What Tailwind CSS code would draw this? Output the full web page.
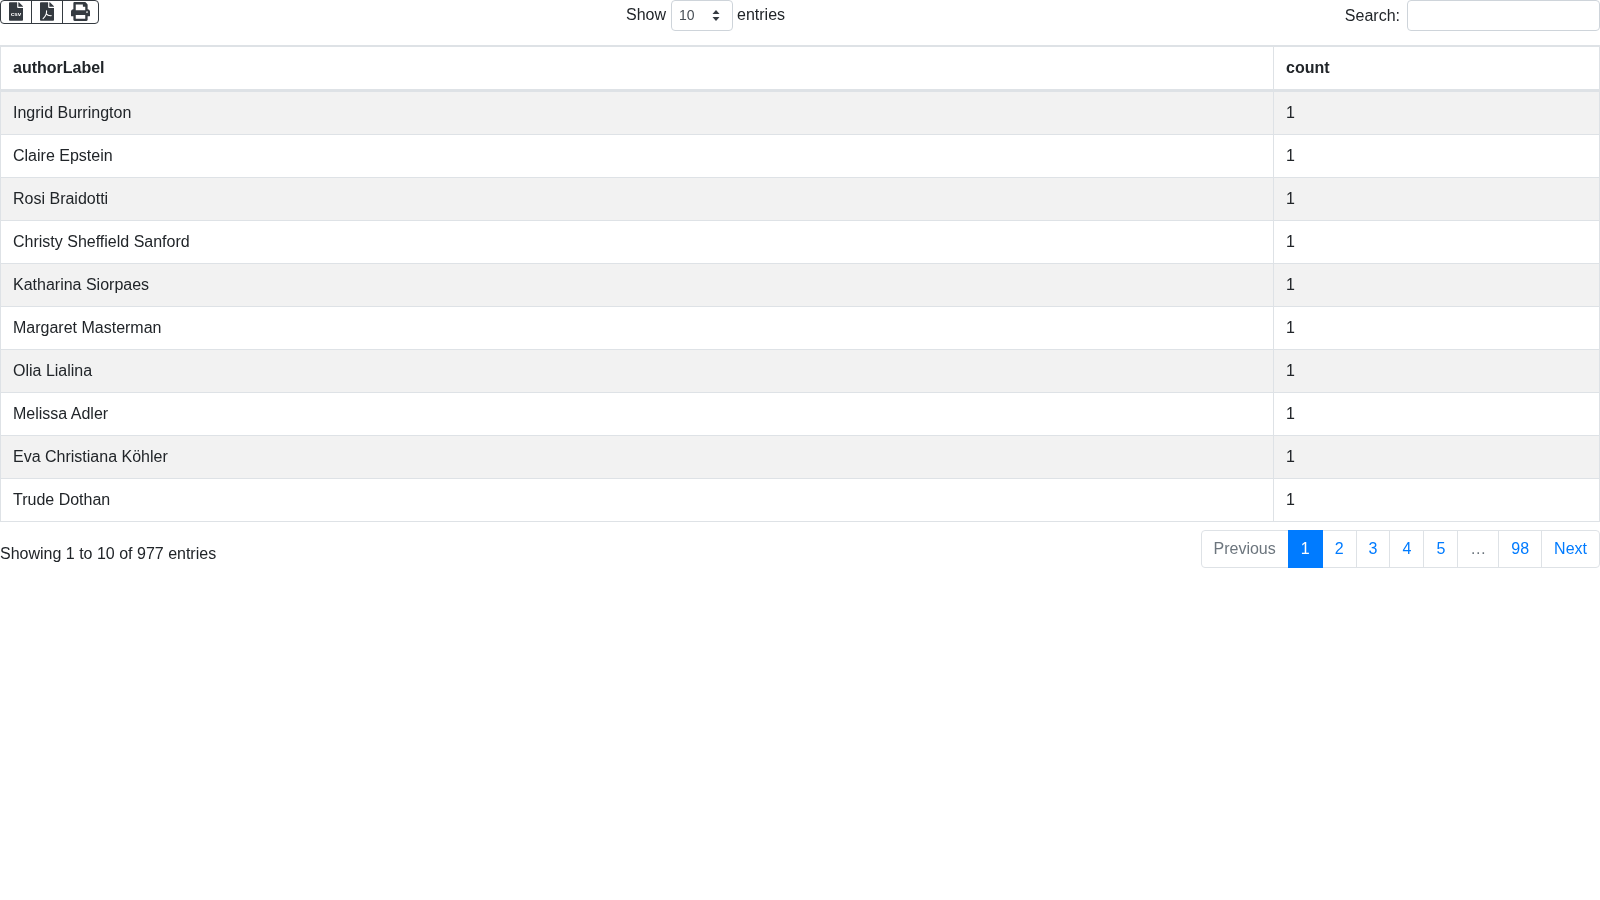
<!DOCTYPE html>
<html lang="en">
<head>
  <meta charset="UTF-8" />
  <title>authorLabel</title>
  <script src="https://cdn.jsdelivr.net/npm/@tailwindcss/browser@4"></script>
</head>
<body class="bg-white text-[#212529] text-base leading-6 font-['Liberation_Sans',Arial,sans-serif]">
<div class="will-change-transform">
  <!-- toolbar -->
  <div class="flex items-start h-[45px]">
    <div class="w-[626px]">
      <div class="inline-flex h-6 border border-[#343a40] rounded-[4px] text-[#343a40]">
        <button class="w-[31px] flex items-center justify-center border-r border-[#343a40]">
          <svg class="w-[14px] h-[19px] -mt-[2px]" viewBox="0 0 384 512" fill="currentColor">
            <path d="M224 136V0H24C10.7 0 0 10.7 0 24v464c0 13.3 10.7 24 24 24h336c13.3 0 24-10.7 24-24V160H248c-13.2 0-24-10.8-24-24zm160-14.1v6.1H256V0h6.1c6.4 0 12.5 2.5 17 7l97.9 98c4.5 4.5 7 10.6 7 16.9z"/>
            <text x="192" y="385" text-anchor="middle" fill="#fff" font-size="170" font-weight="700" font-family="Liberation Sans">csv</text>
          </svg>
        </button>
        <button class="w-[31px] flex items-center justify-center border-r border-[#343a40]">
          <svg class="w-[14px] h-[19px] -mt-[2px]" viewBox="0 0 384 512" fill="currentColor">
            <path d="M224 136V0H24C10.7 0 0 10.7 0 24v464c0 13.3 10.7 24 24 24h336c13.3 0 24-10.7 24-24V160H248c-13.2 0-24-10.8-24-24zm160-14.1v6.1H256V0h6.1c6.4 0 12.5 2.5 17 7l97.9 98c4.5 4.5 7 10.6 7 16.9z"/>
            <path d="M180 235c5 70-35 160-95 215M175 320c25 35 70 55 130 50" fill="none" stroke="#fff" stroke-width="30" stroke-linecap="round"/>
          </svg>
        </button>
        <button class="w-[35px] flex items-center justify-center">
          <svg class="w-[19px] h-[19px] -mt-[2px]" viewBox="0 0 512 512" fill="currentColor">
            <path d="M448 192V77.25c0-8.49-3.37-16.62-9.37-22.63L393.37 9.37c-6-6-14.14-9.37-22.63-9.37H96C78.33 0 64 14.33 64 32v160c-35.35 0-64 28.65-64 64v112c0 8.84 7.16 16 16 16h48v96c0 17.67 14.33 32 32 32h320c17.67 0 32-14.33 32-32v-96h48c8.84 0 16-7.16 16-16V256c0-35.35-28.65-64-64-64zm-64 256H128v-96h256v96zm0-224H128V64h192v48c0 8.84 7.16 16 16 16h48v96zm48 72c-13.25 0-24-10.75-24-24 0-13.26 10.75-24 24-24s24 10.74 24 24c0 13.25-10.75 24-24 24z"/>
          </svg>
        </button>
      </div>
    </div>
    <label class="flex items-center h-[31px] gap-1">
      <span class="-mt-[2px] mr-px">Show</span>
      <div class="w-[62px] h-[31px] border border-[#ced4da] rounded-[4px] flex items-center justify-between pl-[7px] pr-3 text-sm text-[#495057]">
        <span class="-mt-[2px]">10</span>
        <svg class="w-2 h-[11px]" viewBox="0 0 8 11" fill="#343a40"><path d="M4 0 7.5 4h-7zM4 11 .5 7h7z"/></svg>
      </div>
      <span class="-mt-[2px]">entries</span>
    </label>
    <label class="ml-auto flex items-center h-[31px] gap-[7px]">
      Search:
      <input type="text" class="w-[193px] h-[31px] border border-[#ced4da] rounded-[4px]" />
    </label>
  </div>

  <!-- table -->
  <table class="w-full border-collapse table-fixed">
    <thead>
      <tr class="h-[44px] font-bold text-left">
        <th class="w-[1273px] px-3 border border-t-2 border-b-3 border-[#dee2e6]">authorLabel</th>
        <th class="px-3 border border-t-2 border-b-3 border-[#dee2e6]">count</th>
      </tr>
    </thead>
    <tbody>
      <tr class="h-[44px] bg-[#f2f2f2]"><td class="px-3 pt-px border border-[#dee2e6]">Ingrid Burrington</td><td class="px-3 pt-px border border-[#dee2e6]">1</td></tr>
      <tr class="h-[43px]"><td class="px-3 border border-[#dee2e6]">Claire Epstein</td><td class="px-3 border border-[#dee2e6]">1</td></tr>
      <tr class="h-[43px] bg-[#f2f2f2]"><td class="px-3 border border-[#dee2e6]">Rosi Braidotti</td><td class="px-3 border border-[#dee2e6]">1</td></tr>
      <tr class="h-[43px]"><td class="px-3 border border-[#dee2e6]">Christy Sheffield Sanford</td><td class="px-3 border border-[#dee2e6]">1</td></tr>
      <tr class="h-[43px] bg-[#f2f2f2]"><td class="px-3 border border-[#dee2e6]">Katharina Siorpaes</td><td class="px-3 border border-[#dee2e6]">1</td></tr>
      <tr class="h-[43px]"><td class="px-3 border border-[#dee2e6]">Margaret Masterman</td><td class="px-3 border border-[#dee2e6]">1</td></tr>
      <tr class="h-[43px] bg-[#f2f2f2]"><td class="px-3 border border-[#dee2e6]">Olia Lialina</td><td class="px-3 border border-[#dee2e6]">1</td></tr>
      <tr class="h-[43px]"><td class="px-3 border border-[#dee2e6]">Melissa Adler</td><td class="px-3 border border-[#dee2e6]">1</td></tr>
      <tr class="h-[43px] bg-[#f2f2f2]"><td class="px-3 border border-[#dee2e6]">Eva Christiana Köhler</td><td class="px-3 border border-[#dee2e6]">1</td></tr>
      <tr class="h-[43px]"><td class="px-3 border border-[#dee2e6]">Trude Dothan</td><td class="px-3 border border-[#dee2e6]">1</td></tr>
    </tbody>
  </table>

  <!-- footer -->
  <div class="flex justify-between items-start mt-2">
    <div class="pt-3">Showing 1 to 10 of 977 entries</div>
    <ul class="flex h-[38px]">
      <li class="px-3 flex items-center border border-[#dee2e6] rounded-l-[4px] text-[#6c757d]">Previous</li>
      <li class="relative z-10 px-3 flex items-center -ml-px border border-[#007bff] bg-[#007bff] text-white">1</li>
      <li class="px-3 flex items-center -ml-px border border-[#dee2e6] text-[#007bff]">2</li>
      <li class="px-3 flex items-center -ml-px border border-[#dee2e6] text-[#007bff]">3</li>
      <li class="px-3 flex items-center -ml-px border border-[#dee2e6] text-[#007bff]">4</li>
      <li class="px-3 flex items-center -ml-px border border-[#dee2e6] text-[#007bff]">5</li>
      <li class="px-3 flex items-center -ml-px border border-[#dee2e6] text-[#6c757d]">…</li>
      <li class="px-3 flex items-center -ml-px border border-[#dee2e6] text-[#007bff]">98</li>
      <li class="px-3 flex items-center -ml-px border border-[#dee2e6] rounded-r-[4px] text-[#007bff]">Next</li>
    </ul>
  </div>
</div>
</body>
</html>
